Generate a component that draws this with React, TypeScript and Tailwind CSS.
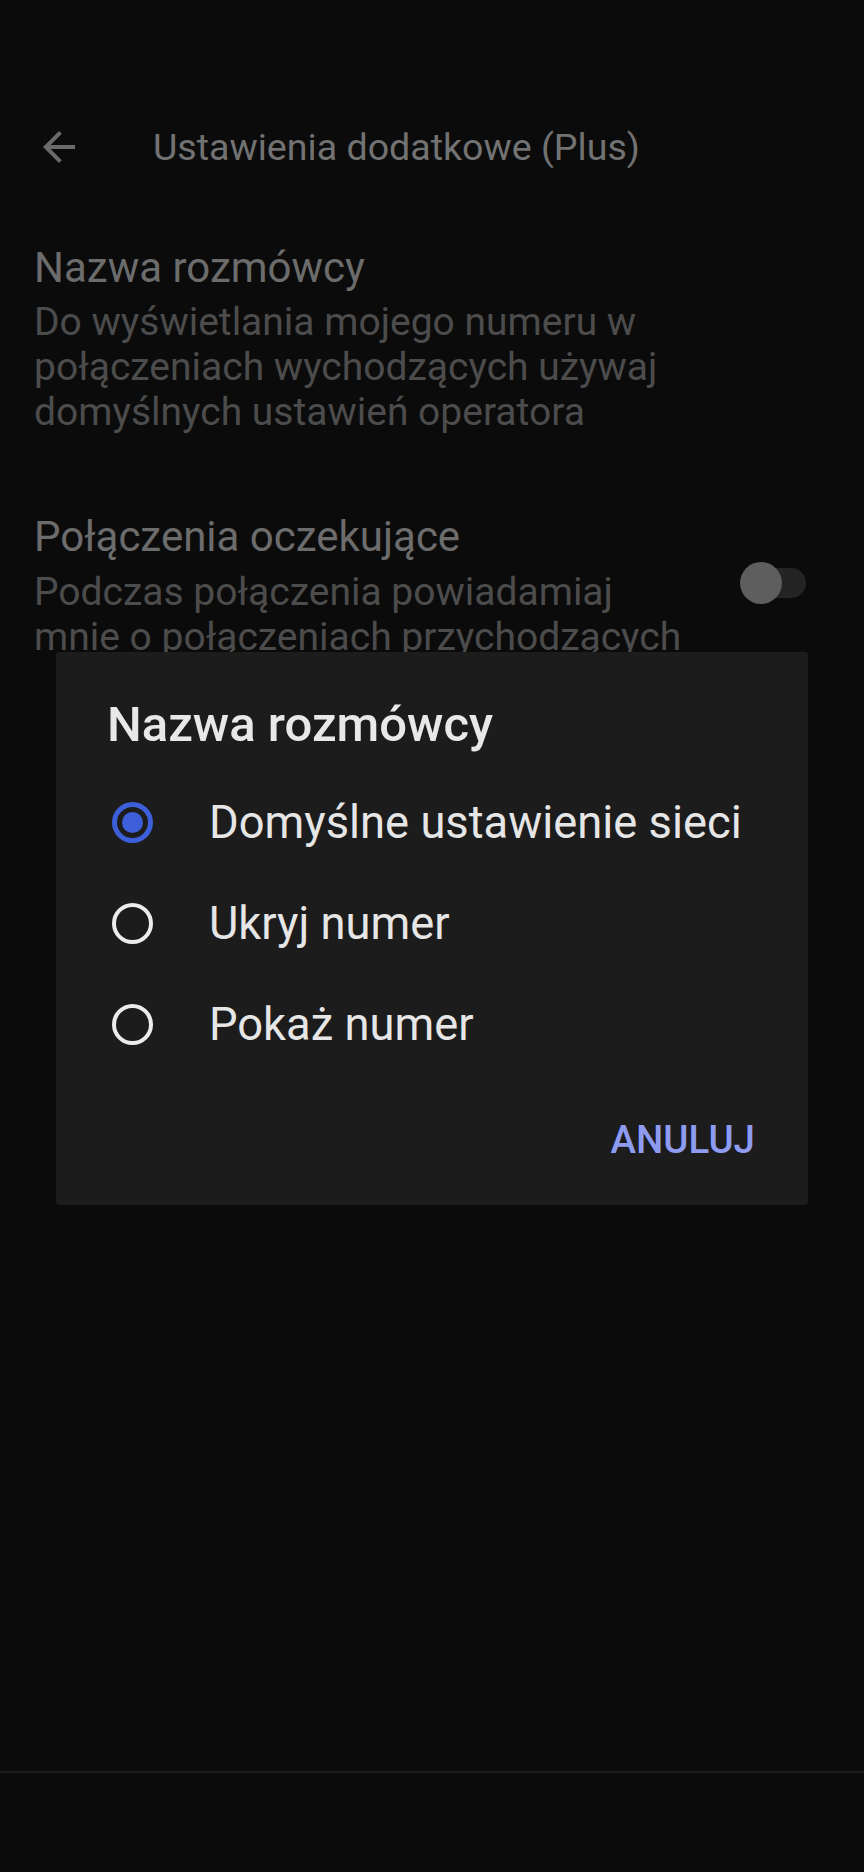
import React from "react";

const options = ["Domyślne ustawienie sieci", "Ukryj numer", "Pokaż numer"];

function Radio({ checked }: { checked: boolean }) {
  if (checked) {
    return (
      <div className="flex h-[41px] w-[41px] items-center justify-center rounded-full border-[5px] border-[#3d5fd9]">
        <div className="h-[21px] w-[21px] rounded-full bg-[#3d5fd9]" />
      </div>
    );
  }
  return <div className="h-[41px] w-[41px] rounded-full border-[4px] border-[#ececec]" />;
}

export default function App() {
  return (
    <div
      className="relative h-[1872px] w-[864px] overflow-hidden bg-[#0b0b0b]"
      style={{ fontFamily: "Roboto, 'Noto Sans', sans-serif" }}
    >
      {/* Toolbar */}
      <div className="mt-[91px] flex h-[112px] items-center pl-[35px]">
        <svg width="48" height="48" viewBox="0 0 24 24" fill="#6a6a6a">
          <path d="M20 11H7.83l5.59-5.59L12 4l-8 8 8 8 1.41-1.41L7.83 13H20v-2z" />
        </svg>
        <span className="ml-[70px] text-[37.6px] leading-[44px] text-[#727272]">
          Ustawienia dodatkowe (Plus)
        </span>
      </div>

      {/* Settings list (dimmed behind dialog) */}
      <div className="mt-[41px] px-[34px]">
        <div className="text-[42px] leading-[48px] text-[#6c6c6c]">Nazwa rozmówcy</div>
        <div className="mt-[8px] text-[39px] leading-[45px] text-[#4c4c4c]">
          <div>Do wyświetlania mojego numeru w</div>
          <div>połączeniach wychodzących używaj</div>
          <div>domyślnych ustawień operatora</div>
        </div>

        <div className="mt-[78px] flex justify-between">
          <div>
            <div className="text-[42px] leading-[48px] text-[#6c6c6c]">Połączenia oczekujące</div>
            <div className="mt-[9px] text-[39px] leading-[45px] text-[#4c4c4c]">
              <div>Podczas połączenia powiadamiaj</div>
              <div>mnie o połączeniach przychodzących</div>
            </div>
          </div>
          <div className="relative mt-[49px] mr-[24px] h-[42px] w-[66px] shrink-0">
            <div className="absolute right-0 top-[6px] h-[30px] w-[58px] rounded-full bg-[#242424]" />
            <div className="absolute left-0 top-0 h-[42px] w-[42px] rounded-full bg-[#5e5e5e]" />
          </div>
        </div>
      </div>

      {/* Bottom divider */}
      <div className="absolute left-0 right-0 top-[1771px] h-[2px] bg-[#1d1d1d]" />

      {/* Dialog */}
      <div className="absolute left-[56px] top-[652px] flex h-[553px] w-[752px] flex-col rounded-[3px] bg-[#1c1c1c] pt-[45px]">
        <div className="pl-[51px] text-[49px] font-medium leading-[56px] text-[#e8e8e8]">
          Nazwa rozmówcy
        </div>
        <div className="mt-[19px]">
          {options.map((o, i) => (
            <div key={o} className="flex h-[101px] items-center pl-[56px]">
              <Radio checked={i === 0} />
              <span className="ml-[56px] text-[45.3px] leading-[52px] text-[#e6e6e6]">{o}</span>
            </div>
          ))}
        </div>
        <div className="mt-[43px] flex justify-end pr-[53px]">
          <span className="text-[38.5px] font-medium leading-[44px] text-[#8d9bf0]">ANULUJ</span>
        </div>
      </div>
    </div>
  );
}
